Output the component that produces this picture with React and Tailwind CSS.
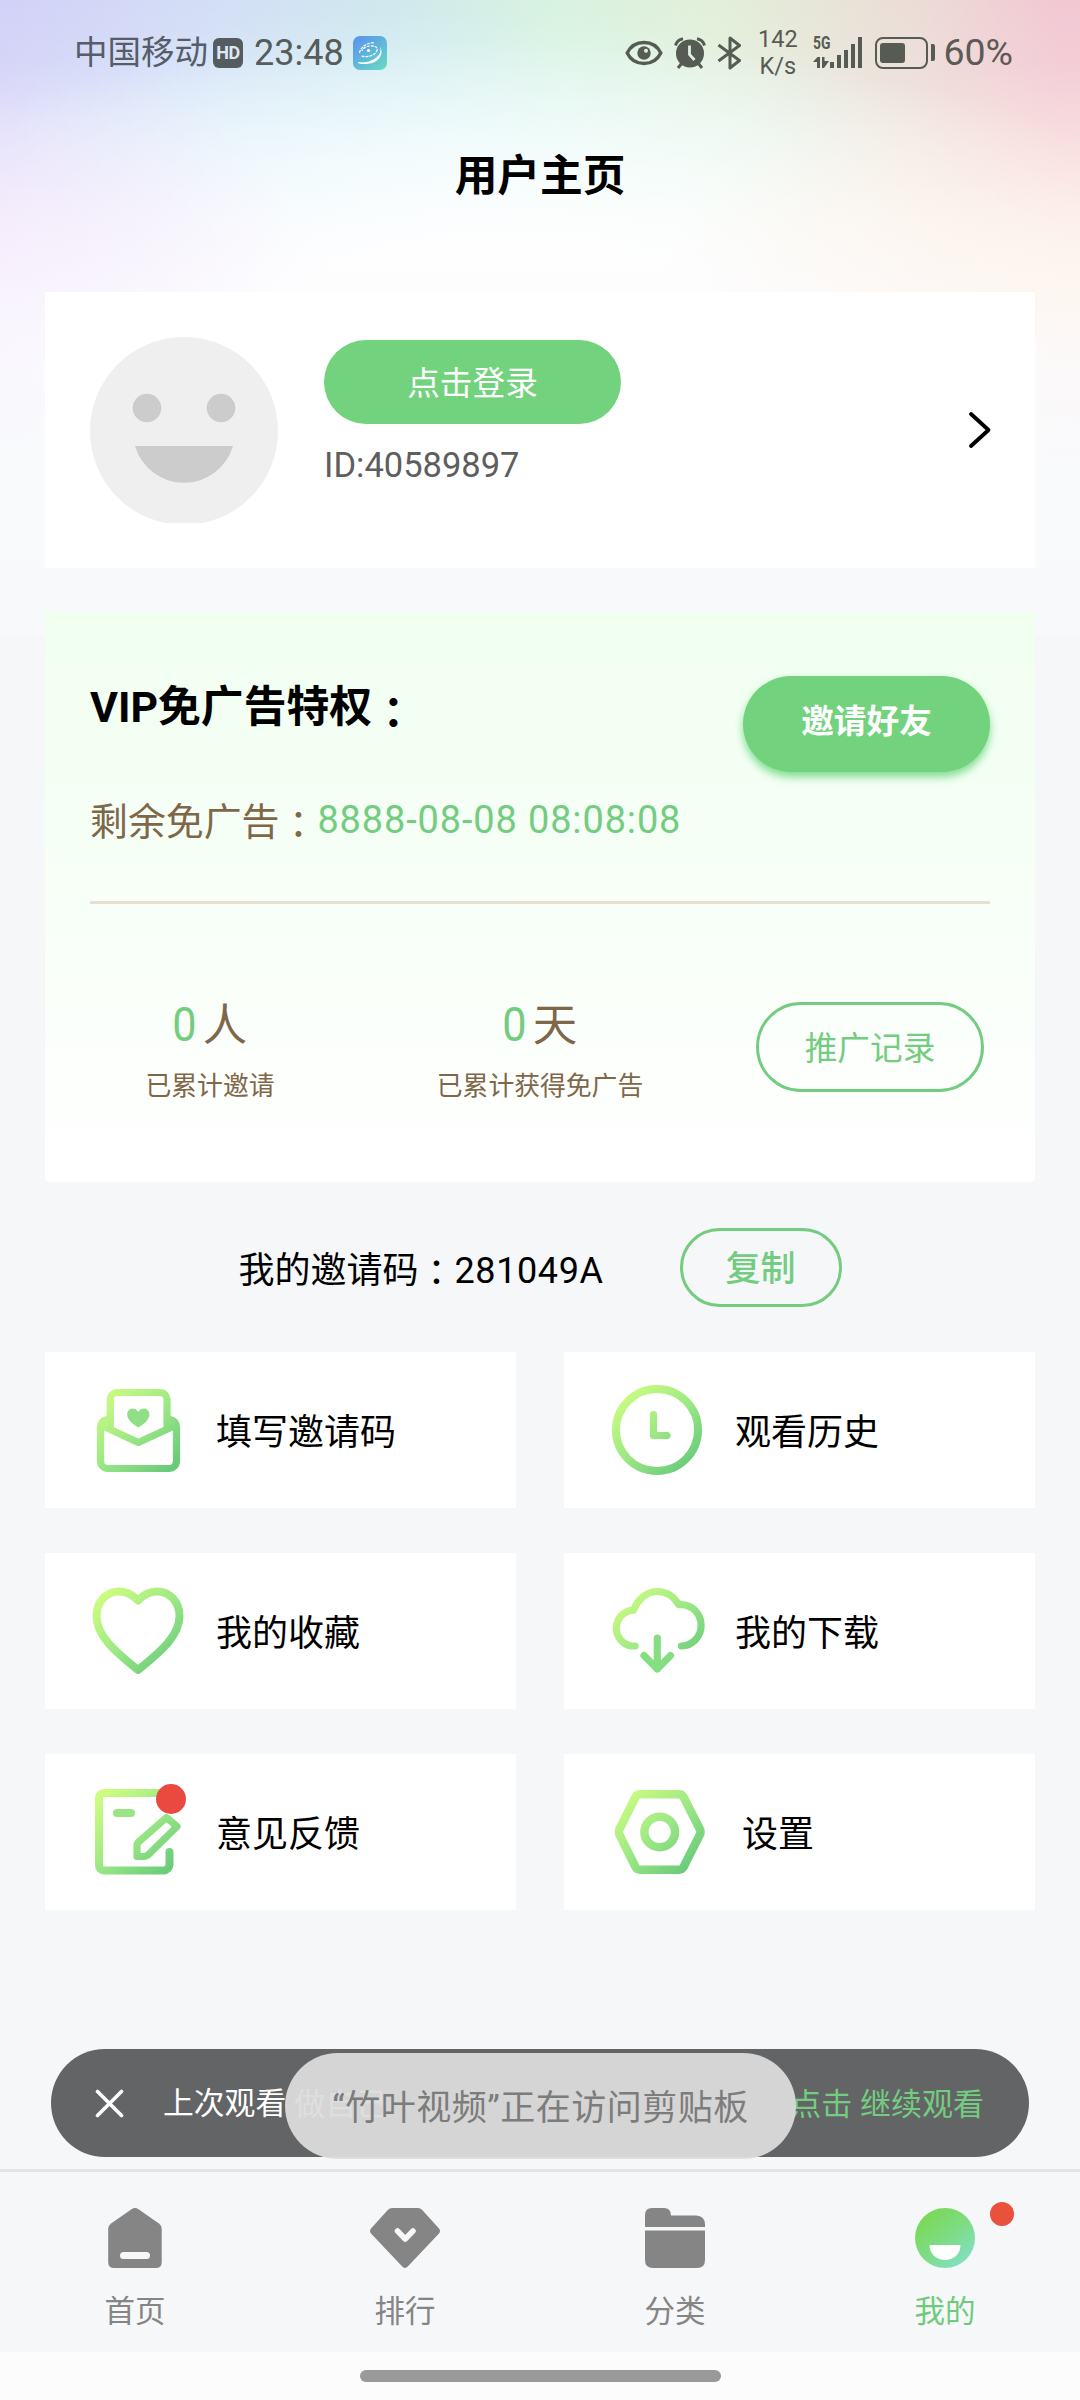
import React from "react";

const Gradient = ({ id }) => (
  <defs>
    <linearGradient id={id} gradientUnits="userSpaceOnUse" x1="14" y1="10" x2="80" y2="84">
      <stop offset="0" stopColor="#cdfc80" />
      <stop offset="0.5" stopColor="#9ee985" />
      <stop offset="1" stopColor="#6acb7b" />
    </linearGradient>
  </defs>
);

const TileSvg = ({ id, children }) => (
  <svg width="96" height="96" viewBox="0 0 96 96" fill="none" stroke={`url(#${id})`} strokeWidth="7.2" strokeLinecap="round" strokeLinejoin="round">
    <Gradient id={id} />
    {children}
  </svg>
);

const EnvelopeIcon = () => (
  <TileSvg id="g-env">
    <path d="M20.3 44V17.5a7 7 0 0 1 7-7H70a7 7 0 0 1 7 7V44" />
    <path d="M17 37.5c-4 1-6.500 4-6.500 8V79a7.500 7.500 0 0 0 7.500 7.500H79a7.500 7.500 0 0 0 7.500-7.500V45.500c0-4-2.500-7-6.500-8" />
    <path d="M14 44.500l34.300 16L83 44.500" />
    <path d="M48.300 45.500C42 41.500 37.200 37.500 37.200 32.500c0-3.500 2.400-6 5.400-6 2.400 0 4.300 1.200 5.700 3.300 1.400-2.100 3.300-3.300 5.700-3.300 3 0 5.400 2.500 5.400 6 0 5-4.800 9-11.100 13z" fill="#8fe084" stroke="none" />
  </TileSvg>
);

const ClockIcon = () => (
  <TileSvg id="g-clock">
    <circle cx="48" cy="48" r="41" strokeWidth="8" />
    <path d="M44.500 32.500V53.500H58" />
  </TileSvg>
);

const HeartIcon = () => (
  <TileSvg id="g-heart">
    <path strokeWidth="8" d="M48 17.500C42.500 11.500 36 8.500 29 8.500 16 8.500 6.500 19 6.500 33 6.500 54 28 70.500 48 87 68 70.500 89.500 54 89.500 33 89.500 19 80 8.500 67 8.500 60 8.500 53.500 11.500 48 17.500Z" />
  </TileSvg>
);

const CloudIcon = () => (
  <TileSvg id="g-cloud">
    <path d="M26 63H22.700A18 18 0 0 1 24.500 27.200C29 16 38 8.500 48.300 8.500 57.500 8.500 65 13.500 69.800 21.700H72A19.800 20.600 0 0 1 72.500 63" />
    <path d="M48.300 55V86M35 72.500L48.300 86 61.500 72.500" stroke="#86de83" />
  </TileSvg>
);

const FeedbackIcon = () => (
  <TileSvg id="g-feed">
    <path strokeWidth="8" d="M70 9H14a5 5 0 0 0-5 5V81.500a5 5 0 0 0 5 5H73.500a6 6 0 0 0 6-6V68" />
    <path strokeWidth="8" stroke="#9be485" d="M27 29H41" />
    <path d="M76.500 33.500L87 42.500 58.500 70.500Q56.500 72.500 53.500 72.500H47V62Q47 59 49 57.500Z" />
  </TileSvg>
);

const HexIcon = () => (
  <TileSvg id="g-hex">
    <path strokeWidth="8.500" d="M31 10.300H70Q73 10.300 74.500 13L90.500 44.500Q92.500 47.900 90.500 51.300L74.500 83Q73 85.700 70 85.700H31Q28 85.700 26.500 83L10.800 51.300Q9 47.900 10.800 44.500L26.500 13Q28 10.300 31 10.300Z" />
    <circle cx="50.700" cy="48" r="15.300" strokeWidth="8.500" />
  </TileSvg>
);

const tiles = [
  { label: "填写邀请码", Icon: EnvelopeIcon },
  { label: "观看历史", Icon: ClockIcon },
  { label: "我的收藏", Icon: HeartIcon },
  { label: "我的下载", Icon: CloudIcon },
  { label: "意见反馈", Icon: FeedbackIcon, dot: true },
  { label: "设置", Icon: HexIcon, indent: true },
];

// Full-width colon, centred in its cell
const Colon = () => <span className="relative top-[3px] font-['Noto_Sans_CJK_TC',sans-serif] leading-none" lang="zh-TW">：</span>;

function StatusBar() {
  return (
    <header className="flex h-[105px] items-center justify-between pl-[74px] pr-[67px] text-[#565c5a]">
      <div className="flex items-center">
        <span className="text-[33.5px] leading-none text-[#555d68]">中国移动</span>
        <span className="ml-[5px] flex h-[30px] w-[30px] items-center justify-center rounded-[6px] bg-[#545c60] text-[18px] font-bold leading-none tracking-[-0.5px] text-[#dfe8f2]">HD</span>
        <span className="ml-[11px] w-[89px] text-[36px] leading-none">23:48</span>
        <svg className="ml-[10px]" width="34" height="34" viewBox="0 0 34 34">
          <defs>
            <linearGradient id="g-app" x1="0" y1="0" x2="0.800" y2="1">
              <stop offset="0" stopColor="#5b8ff2" />
              <stop offset="1" stopColor="#66d6c6" />
            </linearGradient>
          </defs>
          <rect width="34" height="34" rx="7" fill="url(#g-app)" />
          <path d="M6 26c6 1.500 16-1 20.500-8 1.200-2.500 1.500-4.500.5-7 3 4 1.500 10-3 13.500-5 4-13 4-18 3-1.500-.7-1.500-1.300 0-1.500z" fill="#fff" />
          <path d="M6.500 17c1-6 7-10 15-10.500M8.500 20c6 2 14-1 15.500-5.500 1-4-3-5-7.500-4.500-4 .6-7 2.500-7.500 5" fill="none" stroke="#fff" strokeWidth="1.200" strokeDasharray="3 1" />
          <circle cx="15.500" cy="14.500" r="1.600" fill="#fff" />
        </svg>
      </div>

      <div className="flex items-center text-[#565b54]">
        <svg width="38" height="26" viewBox="0 0 38 26">
          <path d="M2.200 13C9 -1 29 -1 35.800 13 29 27 9 27 2.200 13Z" fill="none" stroke="currentColor" strokeWidth="3.400" />
          <circle cx="19" cy="13" r="6.700" fill="currentColor" />
          <circle cx="21" cy="10.800" r="2" fill="#dff0dd" />
        </svg>
        <svg className="ml-[11px]" width="32" height="32" viewBox="0 0 32 32">
          <circle cx="16" cy="16.500" r="14" fill="currentColor" />
          <path d="M8 26l-4 5M24 26l4 5M1.500 8.500C2.500 5 5 2.500 9 1.800M30.500 8.500C29.500 5 27 2.500 23 1.800" stroke="currentColor" strokeWidth="3" fill="none" />
          <path d="M15.500 8.500v9l5 5.500" stroke="#e0f0dc" strokeWidth="2.800" fill="none" />
        </svg>
        <svg className="ml-[11px]" width="25" height="34" viewBox="0 0 25 34">
          <path d="M1.500 9L22.500 24.500 13 32V2L22.500 9.500 1.500 25" fill="none" stroke="currentColor" strokeWidth="3" strokeLinejoin="round" />
        </svg>
        <div className="ml-[15px] flex w-[41px] flex-col items-center text-[23.5px] leading-[27px]">
          <span>142</span>
          <span>K/s</span>
        </div>
        <div className="ml-[15px] flex h-[31px] items-end">
          <div className="flex h-[31px] w-[17px] flex-col justify-between">
            <span className="origin-left scale-x-[0.75] text-[18.5px] font-bold leading-[13px]">5G</span>
            <svg width="17" height="11" viewBox="0 0 17 11" fill="currentColor">
              <path d="M0 5L4.500 0H7V11H4V5ZM9 0H11.500V4H16L11 11H9Z" />
            </svg>
          </div>
          <div className="flex items-end gap-[3px]">
            <span className="h-[6px] w-[4px] bg-current" />
            <span className="h-[13px] w-[4px] bg-current" />
            <span className="h-[18px] w-[4px] bg-current" />
            <span className="h-[24px] w-[4px] bg-current" />
            <span className="h-[31px] w-[4px] bg-current" />
          </div>
        </div>
        <div className="ml-[13px] flex h-[32px] w-[53px] items-center rounded-[8px] border-[2.5px] border-current pl-[3px]">
          <span className="h-[20px] w-[25px] rounded-[3px] bg-current" />
        </div>
        <span className="ml-[3px] h-[17px] w-[4px] rounded-r-[2px] bg-current" />
        <span className="ml-[8px] text-[37.5px] leading-none text-[#5d5956]">60%</span>
      </div>
    </header>
  );
}

function ProfileCard() {
  return (
    <section className="mx-[45px] flex h-[276px] items-start bg-white pl-[45px] pr-[43px] pt-[45px]">
      <svg width="188" height="186" viewBox="0 0 188 186">
        <circle cx="94" cy="94" r="94" fill="#efefef" />
        <circle cx="57" cy="71" r="14.300" fill="#cccccc" />
        <circle cx="131" cy="71" r="14.300" fill="#cccccc" />
        <path d="M45 109H143A51 51 0 0 1 45 109Z" fill="#cccccc" />
      </svg>
      <div className="ml-[46px] flex flex-col pt-[3px]">
        <button className="flex h-[84px] w-[297px] items-center justify-center rounded-full bg-[#73d27d] pt-[4px] text-[32.7px] leading-none text-white">点击登录</button>
        <span className="mt-[23px] text-[34.5px] leading-[36px] text-[#5e5e5e]">ID:40589897</span>
      </div>
      <svg className="ml-auto mt-[73px]" width="25" height="40" viewBox="0 0 25 40" fill="none" stroke="#000" strokeWidth="3.800" strokeLinecap="round" strokeLinejoin="round">
        <path d="M4 4L21.500 20 4 36" />
      </svg>
    </section>
  );
}

function Stat({ unit, label }) {
  return (
    <div className="flex flex-col items-center text-[#7f6749]">
      <div className="flex h-[52px] items-center">
        <span className="origin-center scale-x-[0.9] text-[48px] leading-none text-[#73cc7f]">0</span>
        <span className="ml-[5px] pr-[2px] pt-[2px] text-[44.5px] leading-none">{unit}</span>
      </div>
      <span className="mt-[21px] text-[25.8px] leading-[28px]">{label}</span>
    </div>
  );
}

function VipCard() {
  return (
    <section className="mx-[45px] mt-[44px] h-[570px] rounded-[4px] bg-linear-to-b from-[#f0fff0] to-white">
      <div className="flex h-[160px] items-start justify-between px-[45px] pt-[64px]">
        <h2 className="mt-[6px] flex text-[42.8px] font-bold leading-[50px] text-black">
          <span>VIP免广告特权</span>
          <span className="flex h-[50px] items-center"><Colon /></span>
        </h2>
        <button className="flex h-[96px] w-[247px] items-center justify-center rounded-full bg-[#73d27d] pb-[4px] text-[32.7px] font-bold leading-none text-white shadow-[0_5px_9px_rgba(90,210,110,0.75)]">邀请好友</button>
      </div>
      <p className="ml-[45px] mt-[24px] flex h-[50px] items-center text-[37.9px] leading-none text-[#7f6749]">
        <span>剩余免广告<Colon /></span>
        <span className="tracking-[0.9px] text-[#73cc7f]">8888-08-08 08:08:08</span>
      </p>
      <div className="mx-[45px] mt-[55px] h-[3px] bg-[#e6e0d0]" />
      <div className="mt-[95px] grid grid-cols-3">
        <Stat unit="人" label="已累计邀请" />
        <Stat unit="天" label="已累计获得免广告" />
        <div className="flex justify-center pt-[3px]">
          <button className="flex h-[90px] w-[228px] items-center justify-center rounded-full border-[3px] border-[#73cc7f] pt-[4px] text-[32.7px] leading-none text-[#73cc7f]">推广记录</button>
        </div>
      </div>
    </section>
  );
}

function Tile({ label, Icon, dot, indent }) {
  return (
    <div className="flex h-[156px] items-center bg-white pl-[45px]">
      <div className="relative">
        <Icon />
        {dot && <span className="absolute right-0 top-0 h-[30px] w-[30px] rounded-full bg-[#e9493e]" />}
      </div>
      <span className={indent ? "ml-[37px] pt-[5px] text-[36px] leading-none text-black" : "ml-[30px] pt-[5px] text-[36px] leading-none text-black"}>{label}</span>
    </div>
  );
}

function ResumeBar() {
  return (
    <div className="relative mx-[51px] mt-[139px] flex h-[108px] items-center rounded-full bg-[#636466] pl-[44px] pr-[45px] text-[31px] leading-none">
      <svg width="29" height="29" viewBox="0 0 29 29" stroke="#fff" strokeWidth="3.600" strokeLinecap="round">
        <path d="M2.500 2.500L26.500 26.500M26.500 2.500L2.500 26.500" />
      </svg>
      <span className="ml-[39px] pt-[3px] text-[30.8px] text-white">上次观看</span>
      <span className="ml-[8px] pt-[3px] text-white">做自己</span>
      <span className="ml-auto pt-[3px] text-[#73cc7f]">点击 继续观看</span>
      <div className="absolute left-[234px] top-[4px] flex h-[106px] w-[511px] items-center justify-center rounded-full bg-[rgba(220,220,220,0.94)] pt-[5px] text-[35px] tracking-[0.5px] text-[#7c7c7c]">
        “竹叶视频”正在访问剪贴板
      </div>
    </div>
  );
}

const HomeGlyph = () => (
  <svg width="70" height="60" viewBox="0 0 70 60">
    <path d="M31.500 1.200Q35 -1 38.500 1.200L59 15.500Q61.700 17.500 61.700 21V54Q61.700 60 56 60H14Q8.200 60 8.200 54V21Q8.200 17.500 11 15.500Z" fill="#858585" />
    <rect x="20" y="44" width="30" height="7" rx="3.500" fill="#f5f7f9" />
  </svg>
);
const RankGlyph = () => (
  <svg width="70" height="60" viewBox="0 0 70 60">
    <path d="M22 0H48Q50.500 0 52 1.800L69 20.500Q71 23 69 25.500L38 58.300Q35 61.500 32 58.300L1 25.500Q-1 23 1 20.500L18 1.800Q19.500 0 22 0Z" fill="#858585" />
    <path d="M27.500 23L35.200 31 43 23" fill="none" stroke="#f5f7f9" strokeWidth="5.500" strokeLinecap="round" strokeLinejoin="round" />
  </svg>
);
const FolderGlyph = () => (
  <svg width="60" height="60" viewBox="0 0 60 60" fill="#858585">
    <path d="M0 19V7Q0 0 7 0H19Q26 0 26 7.500H51Q60 8 60 16.500V19Z" />
    <path d="M0 22.500H60V52Q60 60 52 60H8Q0 60 0 52Z" />
  </svg>
);
const MeGlyph = () => (
  <svg width="60" height="60" viewBox="0 0 60 60">
    <defs>
      <linearGradient id="g-me" x1="0.200" y1="0.100" x2="0.850" y2="0.900">
        <stop offset="0" stopColor="#7ad956" />
        <stop offset="0.500" stopColor="#7ddc84" />
        <stop offset="1" stopColor="#82e0c2" />
      </linearGradient>
    </defs>
    <circle cx="30" cy="30" r="30" fill="url(#g-me)" />
    <path d="M14.500 37H45.500C45.500 45.500 39 52 30 52S14.500 45.500 14.500 37Z" fill="#fff" />
  </svg>
);

const tabs = [
  { label: "首页", Glyph: HomeGlyph },
  { label: "排行", Glyph: RankGlyph },
  { label: "分类", Glyph: FolderGlyph },
  { label: "我的", Glyph: MeGlyph, active: true },
];

export default function App() {
  return (
    <div className="flex h-[2400px] w-[1080px] flex-col overflow-hidden bg-[#f5f7f9] bg-[linear-gradient(to_bottom,rgba(251,252,255,0)_0%,rgba(251,252,255,0)_28%,rgba(251,251,254,0.7)_55%,#f9fafc_75%,#f8f9fb_100%),radial-gradient(ellipse_300px_200px_at_0px_260px,rgba(246,232,252,0.85)_0%,rgba(246,232,252,0)_100%),radial-gradient(ellipse_420px_240px_at_1080px_300px,rgba(255,243,230,0.95)_0%,rgba(255,243,230,0)_100%),radial-gradient(ellipse_800px_290px_at_500px_330px,#ffffff_0%,#ffffff_30%,rgba(255,255,255,0.6)_62%,rgba(255,255,255,0)_100%),radial-gradient(ellipse_520px_150px_at_440px_160px,rgba(224,250,254,0.75)_0%,rgba(224,250,254,0)_100%),linear-gradient(to_bottom,rgba(255,255,255,0)_0%,rgba(255,255,255,0.3)_35%,rgba(255,255,255,0.5)_50%),linear-gradient(to_right,#d2d1f8_0%,#d3dff6_20%,#d0e8ee_36%,#d9f3e0_52%,#e2f0da_66%,#ecdcd6_85%,#f2c8d3_98%)] bg-[length:100%_636px] bg-no-repeat font-['Roboto','Noto_Sans_CJK_SC',sans-serif]">
      <StatusBar />
      <h1 className="flex h-[187px] items-start justify-center pt-[46px] text-[42.7px] font-bold leading-[50px] text-black">用户主页</h1>
      <ProfileCard />
      <VipCard />
      <div className="flex h-[170px] items-center justify-center gap-[76px]">
        <span className="pt-[3px] text-[36px] leading-none text-black">我的邀请码<Colon /><span className="tracking-[0.6px]">281049A</span></span>
        <button className="flex h-[79px] w-[162px] items-center justify-center rounded-full border-[3px] border-[#73cc7f] pt-[5px] text-[35px] font-medium leading-none text-[#73cc7f]">复制</button>
      </div>
      <div className="mx-[45px] grid grid-cols-2 gap-x-[48px] gap-y-[45px]">
        {tiles.map((t) => (
          <Tile key={t.label} {...t} />
        ))}
      </div>
      <ResumeBar />
      <nav className="mt-[12px] grid h-[183px] grid-cols-4 border-t-[3px] border-[#e2e4e6] pt-[36px]">
        {tabs.map(({ label, Glyph, active }) => (
          <div key={label} className="relative flex flex-col items-center">
            <Glyph />
            <span className={active ? "mt-[26px] text-[30.5px] leading-[36px] text-[#6fcb7c]" : "mt-[26px] text-[30.5px] leading-[36px] text-[#858585]"}>{label}</span>
            {active && <span className="absolute right-[66px] top-[-6px] h-[24px] w-[24px] rounded-full bg-[#e9513a]" />}
          </div>
        ))}
      </nav>
      <footer className="flex h-[48px] items-center justify-center bg-[#fcfcfc]">
        <span className="h-[12px] w-[361px] rounded-full bg-[#999999]" />
      </footer>
    </div>
  );
}
